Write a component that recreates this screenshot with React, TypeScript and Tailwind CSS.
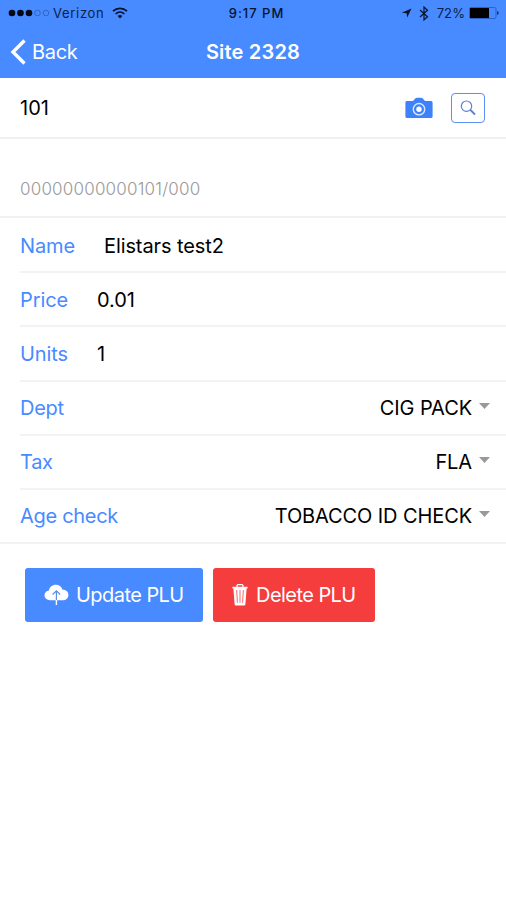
import React from 'react';

const inputs = [
  { label: "Name", value: "Elistars test2", labelClass: "w-[84px]" },
  { label: "Price", value: "0.01", labelClass: "w-[77px]" },
  { label: "Units", value: "1", labelClass: "w-[77px]" }
];

const selects = [
  { label: "Dept", value: "CIG PACK" },
  { label: "Tax", value: "FLA" },
  { label: "Age check", value: "TOBACCO ID CHECK" }
];

const StatusBar = () => {
  return (
    <div className="h-[26px] pl-2 pr-[6px] grid grid-cols-3 items-center text-[13px] text-[#0b1f45]">
      <div className="flex items-center">
        <svg width="42" height="8" viewBox="0 0 42 8" className="shrink-0">
          <circle cx="4" cy="4" r="3.3" fill="#020814" />
          <circle cx="12.5" cy="4" r="3.3" fill="#020814" />
          <circle cx="21" cy="4" r="3.3" fill="#020814" />
          <circle cx="29.5" cy="4" r="2.8" fill="none" stroke="#2c5cb0" strokeWidth="0.8" />
          <circle cx="38" cy="4" r="2.8" fill="none" stroke="#2c5cb0" strokeWidth="0.8" />
        </svg>
        <span className="ml-[3px] tracking-[0.7px]">Verizon</span>
        <svg width="16" height="12" viewBox="0 0 16 12" fill="none" stroke="#06142e" strokeWidth="1.7" className="ml-[7px]">
          <path d="M1 4.2C5 0.4 11 0.4 15 4.2" />
          <path d="M3.6 7C6.2 4.6 9.8 4.6 12.4 7" />
          <path d="M5.6 8.9C7 7.7 9 7.7 10.4 8.9L8 11.4Z" fill="#06142e" stroke="none" />
        </svg>
      </div>
      <div className="pl-[5px] text-center font-medium text-[#06142e] tracking-[1px] whitespace-nowrap">9:17 PM</div>
      <div className="flex items-center justify-end">
        <svg width="11" height="10" viewBox="0 0 11 10" fill="#06142e">
          <path d="M10.5 0.5L6.2 9.5L5.6 5.2L0.8 4.7Z" />
        </svg>
        <svg width="10" height="15" viewBox="0 0 10 15" fill="none" stroke="#06142e" strokeWidth="1.2" className="ml-[7px]">
          <path d="M1 4L8.5 10.8L5 14V1L8.5 4.2L1 11" />
        </svg>
        <span className="ml-[8px] tracking-[0.1px]">72%</span>
        <svg width="31" height="12" viewBox="0 0 31 12" className="ml-1">
          <rect x="0.5" y="0.5" width="26.5" height="11" rx="1.5" fill="none" stroke="#2458b4" strokeWidth="0.8" />
          <rect x="1" y="1" width="19" height="10" fill="#000" />
          <path d="M28.3 4C30 4.6 30 7.4 28.3 8Z" fill="#06142e" />
        </svg>
      </div>
    </div>
  );
};

const NavBar = () => {
  return (
    <div className="h-[52px] px-[10px] grid grid-cols-3 items-center text-white text-[20px]">
      <button className="flex items-center">
        <svg width="16" height="26" viewBox="0 0 16 26" fill="none" stroke="currentColor" strokeWidth="3.4">
          <path d="M14.5 1.5L3 13L14.5 24.5" />
        </svg>
        <span className="ml-[6px] tracking-[-0.3px]">Back</span>
      </button>
      <h1 className="text-center font-semibold whitespace-nowrap tracking-[0.2px]">Site 2328</h1>
    </div>
  );
};

const SearchRow = () => {
  return (
    <div className="h-[61px] pl-[20px] pr-[21px] flex items-center border-b-2 border-[#f0f0f0]">
      <span className="flex-1">101</span>
      <button>
        <svg width="28" height="22" viewBox="0 0 28 22">
          <path d="M2.2 4H8L10 1.8C10.6 1.1 11.2 0.8 12 0.8H16C16.8 0.8 17.4 1.1 18 1.8L20 4H25.8C27 4 27.6 4.6 27.6 5.8V19.2C27.6 20.4 27 21 25.8 21H2.2C1 21 0.4 20.4 0.4 19.2V5.8C0.4 4.6 1 4 2.2 4Z" fill="#3d82fb" />
          <circle cx="14" cy="12.2" r="5.7" fill="none" stroke="#dce8ff" strokeWidth="1.4" />
          <circle cx="14" cy="12.2" r="2.7" fill="#fff" />
        </svg>
      </button>
      <button className="ml-[18px] w-[34px] h-[30px] rounded border border-[#5b8ff5] flex items-center justify-center">
        <svg width="16" height="16" viewBox="0 0 16 16" fill="none" stroke="#5b82d8">
          <circle cx="6.5" cy="6.2" r="5.2" strokeWidth="1.2" />
          <path d="M10.2 9.8L15 14.5" strokeWidth="1.9" />
        </svg>
      </button>
    </div>
  );
};

const Buttons = () => {
  return (
    <div className="pt-6 pl-[25px] flex gap-[10px] text-white text-[20px] tracking-[-0.55px]">
      <button className="w-[178px] h-[54px] rounded-[3px] bg-[#488aff] flex items-center pl-[19px]">
        <svg width="25" height="21" viewBox="0 0 25 21">
          <path d="M6 16.2C2.8 16.2 0.5 14.2 0.5 11.3C0.5 8.7 2.4 6.8 4.9 6.5C5.5 3 8.4 0.8 11.8 0.8C15 0.8 17.5 2.6 18.4 5.6C21.9 5.7 24.4 7.8 24.4 10.9C24.4 14 22 16.2 18.8 16.2Z" fill="#fff" />
          <path d="M12.4 7V16M8.6 10.5L12.4 6.8L16.2 10.5" fill="none" stroke="#5b8fe8" strokeWidth="1.2" />
          <path d="M12.4 16V21" stroke="#fff" strokeWidth="1.4" />
        </svg>
        <span className="ml-[7px] whitespace-nowrap">Update PLU</span>
      </button>
      <button className="w-[162px] h-[54px] rounded-[3px] bg-[#f53d3d] flex items-center pl-[19px]">
        <svg width="16" height="22" viewBox="0 0 16 22">
          <path d="M5 3V1.6C5 1 5.4 0.7 6 0.7H10C10.6 0.7 11 1 11 1.6V3" fill="none" stroke="#fff" strokeWidth="1.2" />
          <path d="M0.4 2.8H15.6V4.5H14.6L13.4 20.2C13.3 21 13 21.4 12.3 21.4H3.7C3 21.4 2.7 21 2.6 20.2L1.4 4.5H0.4Z" fill="#fff" />
          <path d="M4.7 6L5.4 18.8M8 6V18.8M11.3 6L10.6 18.8" stroke="#f56b6b" strokeWidth="1" />
        </svg>
        <span className="ml-[8px] whitespace-nowrap">Delete PLU</span>
      </button>
    </div>
  );
};

const App = () => {
  return (
    <div className="w-full min-h-[900px] bg-white text-black text-[20px] leading-6 font-['Inter',sans-serif]">
      <header className="bg-[#488aff]">
        <StatusBar />
        <NavBar />
      </header>
      <main>
        <SearchRow />
        <div className="h-[79px] px-[20px] pb-[15px] flex items-end border-b-2 border-[#f1f1f1]">
          <span className="text-[17px] font-light text-[#999] tracking-[0.2px]">00000000000101/000</span>
        </div>
        <div className="pt-px border-b-2 border-[#f2f2f2]">
          <div className="pl-[20px] divide-y-2 divide-[#f3f3f3] tracking-[-0.1px]">
            {inputs.map((item) => (
              <div key={item.label} className="h-[54.2px] pt-px flex items-center">
                <label className={`${item.labelClass} text-[#488aff]`}>{item.label}</label>
                <span>{item.value}</span>
              </div>
            ))}
            {selects.map((item) => (
              <div key={item.label} className="h-[54.2px] last:h-[52px] pt-px pr-4 flex items-center">
                <label className="flex-1 text-[#488aff] tracking-[-0.3px]">{item.label}</label>
                <span>{item.value}</span>
                <svg width="11" height="6" viewBox="0 0 11 6" fill="#999" className="ml-[7px] mb-1">
                  <path d="M0 0H11L5.5 6Z" />
                </svg>
              </div>
            ))}
          </div>
        </div>
        <Buttons />
      </main>
    </div>
  );
};

export default App;
